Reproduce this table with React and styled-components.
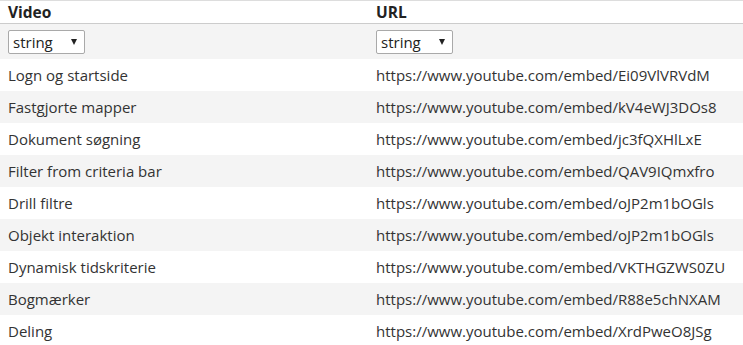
import React from "react";
import styled, { createGlobalStyle } from "styled-components";

const GlobalStyle = createGlobalStyle`
  html, body {
    margin: 0;
    padding: 0;
    background: #fff;
  }
  body {
    font-family: "Open Sans", "Noto Sans", sans-serif;
    color: #333;
  }
`;

const videos = [
  ["Logn og startside", "Ei09VlVRVdM"],
  ["Fastgjorte mapper", "kV4eWJ3DOs8"],
  ["Dokument søgning", "jc3fQXHlLxE"],
  ["Filter from criteria bar", "QAV9IQmxfro"],
  ["Drill filtre", "oJP2m1bOGls"],
  ["Objekt interaktion", "oJP2m1bOGls"],
  ["Dynamisk tidskriterie", "VKTHGZWS0ZU"],
  ["Bogmærker", "R88e5chNXAM"],
  ["Deling", "XrdPweO8JSg"],
];

const Table = styled.table`
  width: 100%;
  border-collapse: collapse;
  border-top: 1px solid #ddd;
  font-size: 15px;
`;

const HeadCell = styled.th`
  box-sizing: border-box;
  text-align: left;
  font-size: 15.5px;
  font-weight: 700;
  padding: 0 8px;
  height: 23px;
  line-height: 22px;
  color: #222;
  border-bottom: 1px solid #ccc;
  width: ${(p) => p.$width || "auto"};
`;

const FilterRow = styled.tr`
  background: #f4f4f4;
`;

const FilterCell = styled.td`
  box-sizing: border-box;
  padding: 6px 8px 5px;
  height: 35px;
`;

const SelectWrap = styled.span`
  position: relative;
  display: block;
  width: 77px;
  height: 24px;
  &::after {
    content: "";
    position: absolute;
    right: 8px;
    top: 9px;
    border-left: 3.5px solid transparent;
    border-right: 3.5px solid transparent;
    border-top: 6px solid #222;
    pointer-events: none;
  }
`;

const Select = styled.select`
  appearance: none;
  box-sizing: border-box;
  display: block;
  width: 100%;
  height: 100%;
  margin: 0;
  padding: 0 0 0 4px;
  border: 1px solid #a9a9a9;
  border-radius: 2px;
  background: #fff;
  font-family: inherit;
  font-size: 15px;
  color: #222;
`;

const Row = styled.tr`
  background: ${(p) => (p.$odd ? "#f4f4f4" : "#fff")};
`;

const Cell = styled.td`
  box-sizing: border-box;
  padding: 0 8px;
  height: 32px;
  line-height: 32px;
  white-space: nowrap;
`;

export default function App() {
  return (
    <>
      <GlobalStyle />
      <Table>
        <thead>
          <tr>
            <HeadCell $width="368px">Video</HeadCell>
            <HeadCell>URL</HeadCell>
          </tr>
          <FilterRow>
            <FilterCell>
              <SelectWrap>
                <Select defaultValue="string">
                  <option value="string">string</option>
                </Select>
              </SelectWrap>
            </FilterCell>
            <FilterCell>
              <SelectWrap>
                <Select defaultValue="string">
                  <option value="string">string</option>
                </Select>
              </SelectWrap>
            </FilterCell>
          </FilterRow>
        </thead>
        <tbody>
          {videos.map(([title, id], i) => (
            <Row key={title} $odd={i % 2 === 1}>
              <Cell>{title}</Cell>
              <Cell>https://www.youtube.com/embed/{id}</Cell>
            </Row>
          ))}
        </tbody>
      </Table>
    </>
  );
}
